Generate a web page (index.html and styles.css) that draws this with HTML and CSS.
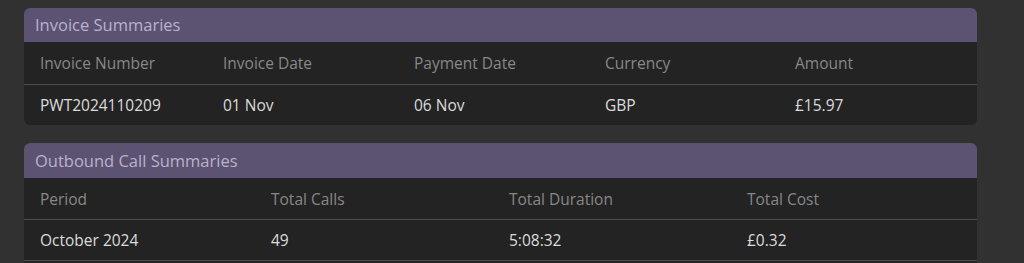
FILE: index.html
```html
<!DOCTYPE html>
<html>
<head>
<meta charset="utf-8">
<link rel="stylesheet" href="styles.css">
</head>
<body>
<div class="page">
  <section class="card">
    <div class="card-title">Invoice Summaries</div>
    <div class="grid grid-inv head">
      <div>Invoice Number</div><div>Invoice Date</div><div>Payment Date</div><div>Currency</div><div>Amount</div>
    </div>
    <div class="grid grid-inv row">
      <div>PWT2024110209</div><div>01 Nov</div><div>06 Nov</div><div>GBP</div><div>£15.97</div>
    </div>
  </section>
  <section class="card card-calls">
    <div class="card-title">Outbound Call Summaries</div>
    <div class="grid grid-call head">
      <div>Period</div><div>Total Calls</div><div>Total Duration</div><div>Total Cost</div>
    </div>
    <div class="grid grid-call row lined">
      <div>October 2024</div><div>49</div><div>5:08:32</div><div>£0.32</div>
    </div>
    <div class="grid grid-call row">
      <div>&nbsp;</div>
    </div>
  </section>
</div>
</body>
</html>
```

FILE: styles.css
```css
html, body {
  margin: 0;
  padding: 0;
  background: #313131;
  font-family: "Open Sans", "Noto Sans", sans-serif;
}
.page {
  padding: 8px 47px 0 24px;
  display: flex;
  flex-direction: column;
  gap: 18px;
}
.card {
  background: #232323;
  border-radius: 6px;
  overflow: hidden;
}
.card-title {
  background: #5c5272;
  color: #bab2c9;
  font-size: 16.5px;
  height: 34px;
  line-height: 34px;
  padding-left: 11px;
}
.grid {
  display: grid;
  padding-left: 16px;
  align-items: center;
}
.grid-inv {
  grid-template-columns: 183px 191px 191px 190px 1fr;
}
.grid-call {
  grid-template-columns: 231px 238px 238px 1fr;
}
.head {
  height: 42px;
  color: #888888;
  font-size: 15.5px;
  border-bottom: 1px solid #4f4b4b;
}
.row {
  height: 40px;
  color: #dcdcdc;
  font-size: 15.5px;
  padding-bottom: 1px;
  box-sizing: border-box;
}
.lined {
  border-bottom: 1px solid #4f4b4b;
}
.card-calls .card-title {
  height: 35px;
  line-height: 35px;
}
.card-calls .head {
  height: 41px;
}
.card-calls .row {
  height: 41px;
  padding-bottom: 0;
}
```
